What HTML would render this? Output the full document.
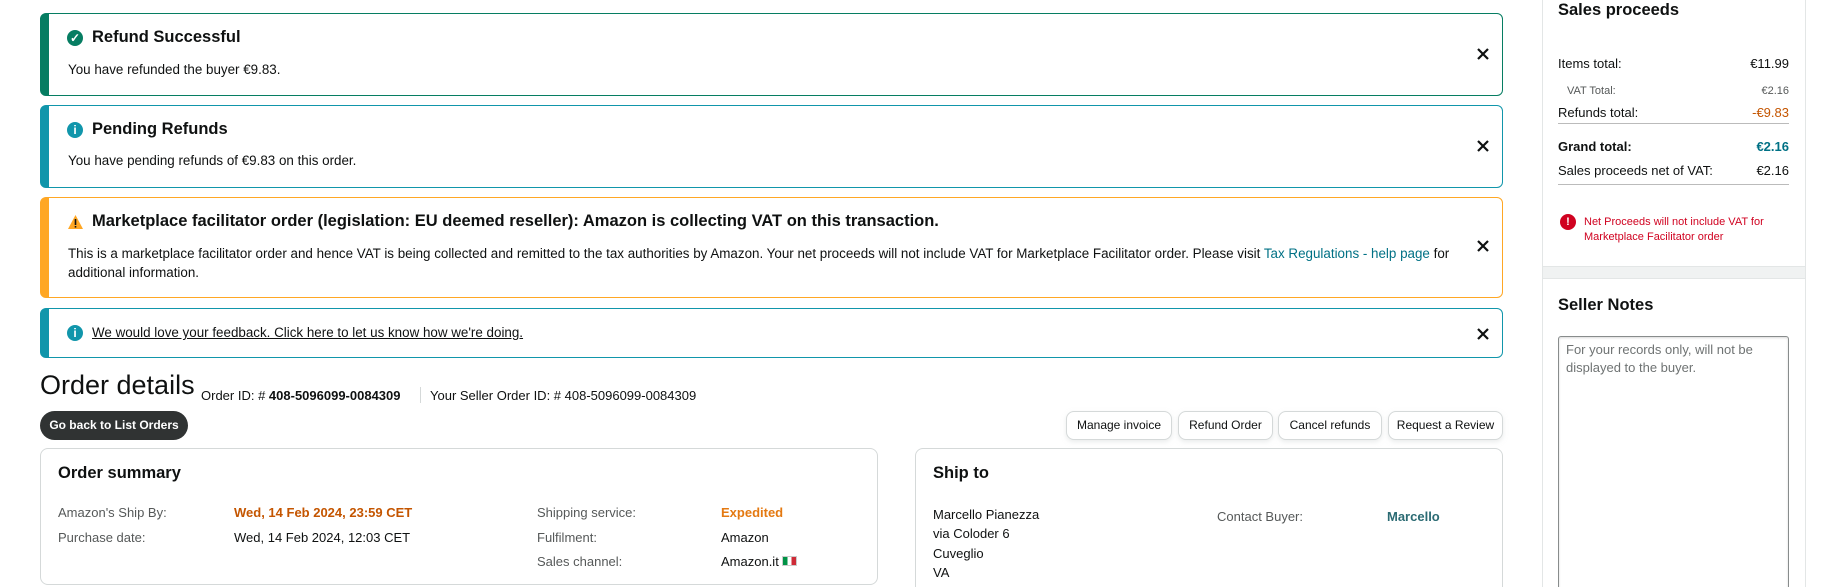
<!DOCTYPE html>
<html><head><meta charset="utf-8"><style>
*{margin:0;padding:0;box-sizing:border-box}
html,body{width:1830px;height:587px;overflow:hidden}
body{background:#fff;font-family:"Liberation Sans",sans-serif;color:#0f1111}
#w{position:relative;width:1830px;height:587px;overflow:hidden}
.a{position:absolute}
.al{position:absolute;left:40px;width:1463px;border:1px solid;border-left-width:9px;border-radius:6px;background:#fff}
.t{position:absolute;left:43px;font-size:16.5px;font-weight:bold;white-space:nowrap}
.b{position:absolute;left:19px;font-size:13.4px;white-space:nowrap;line-height:20px}
.x{position:absolute;right:12px;width:14px;height:14px}
.ic{position:absolute;left:18px;width:16px;height:16px;border-radius:50%;color:#fff;font-size:12px;font-weight:bold;text-align:center;line-height:16px}
.btn{position:absolute;top:411px;height:29px;border:1px solid #d5d9d9;border-radius:8px;font-size:12px;line-height:27px;text-align:center;box-shadow:0 2px 5px rgba(213,217,217,.5);background:#fff}
.box{position:absolute;top:448px;height:137px;border:1px solid #d5d9d9;border-radius:8px}
.h{position:absolute;font-size:16.5px;font-weight:bold;white-space:nowrap}
.s{position:absolute;font-size:13px;white-space:nowrap;line-height:16px}
.g{color:#565959}
</style></head><body><div id="w">
<svg width="0" height="0" style="position:absolute"><defs><symbol id="cx" viewBox="0 0 14 14"><path d="M2 2L12 12M12 2L2 12" stroke="#0f1111" stroke-width="2.2"/></symbol></defs></svg>

<div class="al" style="top:13px;height:83px;border-color:#067d62">
 <div class="ic" style="top:16px;background:#067d62">✓</div>
 <div class="t" style="top:14px">Refund Successful</div>
 <div class="b" style="top:46px">You have refunded the buyer €9.83.</div>
 <svg class="x" style="top:33px"><use href="#cx"/></svg>
</div>
<div class="al" style="top:105px;height:83px;border-color:#1196ab">
 <div class="ic" style="top:16px;background:#1196ab">i</div>
 <div class="t" style="top:14px">Pending Refunds</div>
 <div class="b" style="top:45px">You have pending refunds of €9.83 on this order.</div>
 <svg class="x" style="top:33px"><use href="#cx"/></svg>
</div>
<div class="al" style="top:197px;height:101px;border-color:#ffa724">
 <svg class="a" style="left:18px;top:16px" width="17" height="16" viewBox="0 0 17 16"><path d="M8.5 1 L16 15 H1 Z" fill="#ffa724"/><rect x="7.7" y="5" width="1.6" height="6" fill="#0f1111"/><rect x="7.7" y="12" width="1.6" height="1.6" fill="#0f1111"/></svg>
 <div class="t" style="top:14px">Marketplace facilitator order (legislation: EU deemed reseller): Amazon is collecting VAT on this transaction.</div>
 <div class="b" style="top:46px;line-height:19px">This is a marketplace facilitator order and hence VAT is being collected and remitted to the tax authorities by Amazon. Your net proceeds will not include VAT for Marketplace Facilitator order. Please visit <span style="color:#007185">Tax Regulations - help page</span> for<br>additional information.</div>
 <svg class="x" style="top:41px"><use href="#cx"/></svg>
</div>
<div class="al" style="top:308px;height:50px;border-color:#1196ab">
 <div class="ic" style="top:16px;background:#1196ab">i</div>
 <div class="b" style="top:14px;left:43px;text-decoration:underline">We would love your feedback. Click here to let us know how we're doing.</div>
 <svg class="x" style="top:18px"><use href="#cx"/></svg>
</div>

<div class="a" style="left:40px;top:370px;font-size:27px;white-space:nowrap">Order details</div>
<div class="s" style="left:201px;top:388px">Order ID: # <b>408-5096099-0084309</b></div>
<div class="a" style="left:420px;top:387px;width:1px;height:16px;background:#d5d9d9"></div>
<div class="s" style="left:430px;top:388px">Your Seller Order ID: # 408-5096099-0084309</div>

<div class="a" style="left:40px;top:411px;width:148px;height:29px;border-radius:15px;background:#303333;color:#fff;font-size:12px;font-weight:bold;text-align:center;line-height:29px">Go back to List Orders</div>
<div class="btn" style="left:1066px;width:106px">Manage invoice</div>
<div class="btn" style="left:1178px;width:95px">Refund Order</div>
<div class="btn" style="left:1278px;width:104px">Cancel refunds</div>
<div class="btn" style="left:1388px;width:115px">Request a Review</div>

<div class="box" style="left:40px;width:838px">
 <div class="h" style="left:17px;top:15px">Order summary</div>
 <div class="s g" style="left:17px;top:56px">Amazon's Ship By:</div>
 <div class="s" style="left:193px;top:56px;color:#c45500;font-weight:bold">Wed, 14 Feb 2024, 23:59 CET</div>
 <div class="s g" style="left:496px;top:56px">Shipping service:</div>
 <div class="s" style="left:680px;top:56px;color:#e47911;font-weight:bold">Expedited</div>
 <div class="s g" style="left:17px;top:81px">Purchase date:</div>
 <div class="s" style="left:193px;top:81px">Wed, 14 Feb 2024, 12:03 CET</div>
 <div class="s g" style="left:496px;top:81px">Fulfilment:</div>
 <div class="s" style="left:680px;top:81px">Amazon</div>
 <div class="s g" style="left:496px;top:105px">Sales channel:</div>
 <div class="s" style="left:680px;top:105px">Amazon.it <span style="display:inline-block;width:15px;height:10px;background:linear-gradient(90deg,#009246 33%,#fff 33% 66%,#ce2b37 66%);border:1px solid #ccc"></span></div>
</div>

<div class="box" style="left:915px;width:588px;height:200px">
 <div class="h" style="left:17px;top:15px">Ship to</div>
 <div class="s" style="left:17px;top:56px;line-height:19.3px">Marcello Pianezza<br>via Coloder 6<br>Cuveglio<br>VA<br>21030</div>
 <div class="s g" style="left:301px;top:60px">Contact Buyer:</div>
 <div class="s" style="left:471px;top:60px;color:#2b6b73;font-weight:bold">Marcello</div>
</div>

<div class="a" style="left:1542px;top:0;width:264px;height:587px;border-left:1px solid #e3e6e6;border-right:1px solid #e3e6e6"></div>
<div class="h" style="left:1558px;top:1px">Sales proceeds</div>
<div class="s" style="left:1558px;top:56px">Items total:</div><div class="s" style="right:41px;top:56px">€11.99</div>
<div class="s g" style="left:1567px;top:83px;font-size:11px">VAT Total:</div><div class="s g" style="right:41px;top:83px;font-size:11px">€2.16</div>
<div class="s" style="left:1558px;top:105px">Refunds total:</div><div class="s" style="right:41px;top:105px;color:#c45500">-€9.83</div>
<div class="a" style="left:1558px;top:123px;width:231px;height:1px;background:#bbb"></div>
<div class="s" style="left:1558px;top:139px;font-weight:bold">Grand total:</div><div class="s" style="right:41px;top:139px;color:#007185;font-weight:bold">€2.16</div>
<div class="s" style="left:1558px;top:163px">Sales proceeds net of VAT:</div><div class="s" style="right:41px;top:163px">€2.16</div>
<div class="a" style="left:1558px;top:184px;width:231px;height:1px;background:#bbb"></div>
<div class="a" style="left:1560px;top:214px;width:16px;height:16px;border-radius:50%;background:#d00220;color:#fff;font-size:11px;font-weight:bold;text-align:center;line-height:16px">!</div>
<div class="s" style="left:1584px;top:215px;font-size:11px;color:#d00220;line-height:15px">Net Proceeds will not include VAT for<br>Marketplace Facilitator order</div>
<div class="a" style="left:1543px;top:266px;width:262px;height:13px;background:#f0f2f2;border-top:1px solid #e3e6e6;border-bottom:1px solid #e3e6e6"></div>
<div class="h" style="left:1558px;top:296px">Seller Notes</div>
<div class="a" style="left:1558px;top:336px;width:231px;height:300px;border:1px solid #888c8c;border-radius:3px;box-shadow:inset 0 1px 2px rgba(0,0,0,.15)"></div>
<div class="s" style="left:1566px;top:341px;color:#6f7373;line-height:18px">For your records only, will not be<br>displayed to the buyer.</div>
</div></body></html>
